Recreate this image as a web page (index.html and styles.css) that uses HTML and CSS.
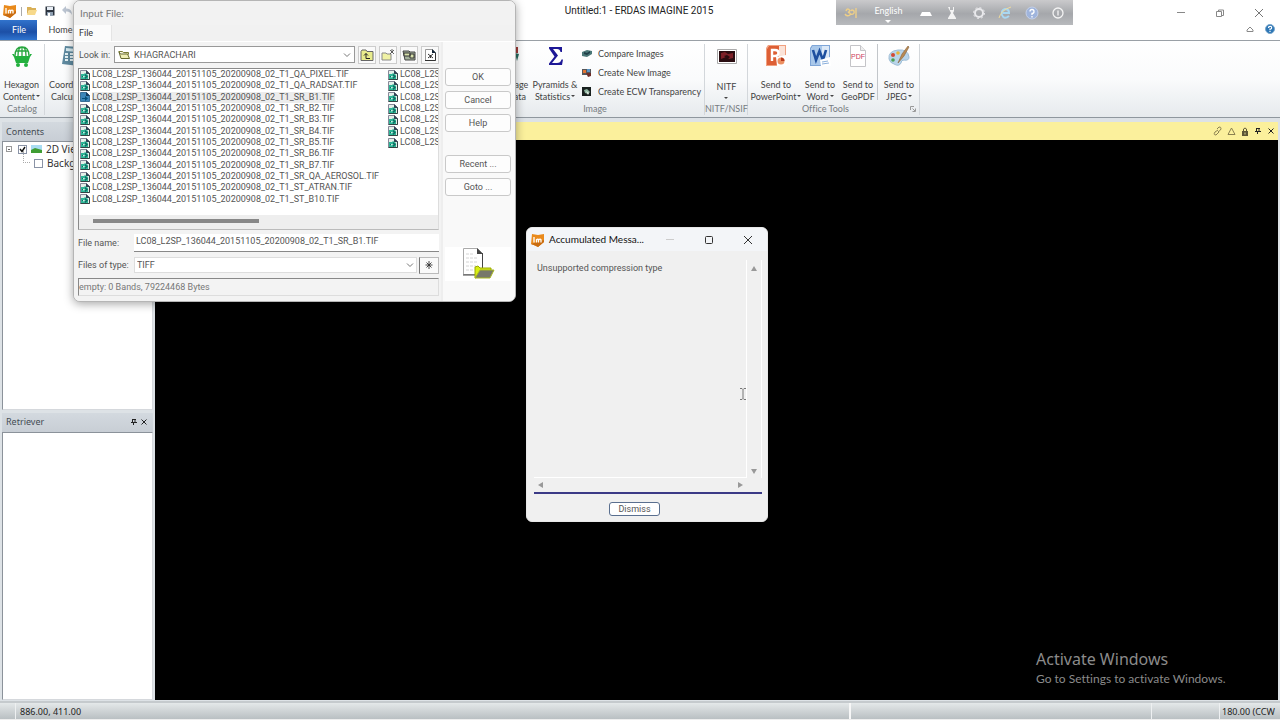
FILE: index.html
```html
<!DOCTYPE html>
<html lang="en">
<head>
<meta charset="utf-8">
<title>Untitled:1 - ERDAS IMAGINE 2015</title>
<link rel="stylesheet" href="styles.css">
</head>
<body>
<svg class="defs" aria-hidden="true">
  <symbol id="tif" viewBox="0 0 10 10"><path d="M.5.5h6l3 3v6h-9z" fill="#e4efe9" stroke="#889"/><path d="M6 0v4h4z" fill="#345"/><path d="M1 4h3l1-1 3 2v4H1z" fill="#2fb597"/><path d="M2 6h3V4l3 2.500L5 9V7H2z" fill="#0a6e62"/><path d="M3 6l3 .5-3 1z" fill="#d8fff0"/><path d="M.5 9.500h9v-6" fill="none" stroke="#344"/></symbol>
  <symbol id="tifsel" viewBox="0 0 10 10"><path d="M.5.5h6l3 3v6h-9z" fill="#3b86b8" stroke="#3a6f96"/><path d="M6 0v4h4z" fill="#143a5c"/><path d="M2 6h3V4l3 2.500L5 9V7H2z" fill="#07507a"/></symbol>
  <symbol id="imlogo" viewBox="0 0 14 14"><path d="M1 1l6 1 6-1v8l-3 2.500-3 2.500-3-1.500L0 11z" fill="#e98a1c"/><path d="M0 11l4 1.500 3 1.500 6-5v-2z" fill="#c96c10"/><path d="M3 4v5.500M5.500 9.500V6.200M5.500 6.800q1.500-1.300 2 0v2.700M7.500 6.800q1.800-1.300 2.500 0v2.700" stroke="#fff" stroke-width="1.300" fill="none"/></symbol>
  <symbol id="pin" viewBox="0 0 8 8"><path d="M2.500 1.500v3M5 1.500v3M2 1.500h4M1 4.500h6M3.500 4.500V7" stroke="#222" fill="none"/></symbol>
  <symbol id="x" viewBox="0 0 8 8"><path d="M1.500 1.500l5 5M6.500 1.500l-5 5" stroke="#222"/></symbol>
  <symbol id="chev" viewBox="0 0 8 8"><path d="M1 2.500l3 3 3-3" stroke="#777" fill="none"/></symbol>
</svg>

<div class="app">
  <header class="titlebar">
    <div class="quick">
      <svg class="logo" viewBox="0 0 14 14"><use href="#imlogo"/></svg>
      <span class="bar"></span>
      <button class="ico" aria-label="Open"><svg width="12" height="10" viewBox="0 0 12 10"><path d="M1 1h4l1 1h4v2H3L1 9z" fill="#d9b057"/><path d="M3 4h8L9 9H1z" fill="#f7d98b"/></svg></button>
      <button class="ico" aria-label="Save"><svg width="10" height="10" viewBox="0 0 10 10"><path d="M.5.5h9v9h-9z" fill="#2c3440"/><path d="M2 1h6v3H2z" fill="#e8eef5"/><path d="M2 6h6v4H2z" fill="#8fa0b2"/><path d="M3 7h2v3H3z" fill="#fff"/></svg></button>
      <button class="ico" aria-label="Undo"><svg width="12" height="10" viewBox="0 0 12 10"><path d="M0 4l4-4v2.500q6-.5 6 6.500-2-4-6-3.500V8z" fill="#bcc5d2"/></svg></button>
    </div>
    <h1 class="apptitle">Untitled:1 - ERDAS IMAGINE 2015</h1>
    <div class="winbtns">
      <button class="ico" aria-label="Minimize"><svg width="10" height="10" viewBox="0 0 10 10"><path d="M1 4.500h8" stroke="#888"/></svg></button>
      <button class="ico" aria-label="Restore"><svg width="10" height="10" viewBox="0 0 10 10"><path d="M1.500 3.500h5v5h-5zM3.500 3.500v-1.500h5v5.500H6.500" fill="none" stroke="#888"/></svg></button>
      <button class="ico" aria-label="Close"><svg width="10" height="10" viewBox="0 0 10 10"><path d="M1 1l8 8M9 1L1 9" stroke="#777"/></svg></button>
    </div>
  </header>

  <nav class="tabs">
    <button class="tab active">File</button>
    <button class="tab">Home</button>
    <div class="tabright">
      <button class="ico" aria-label="Collapse ribbon"><svg width="8" height="8" viewBox="0 0 8 8"><path d="M4 2L1 5v1.500h6V5z" fill="#fff" stroke="#888"/></svg></button>
      <button class="ico" aria-label="Help"><svg width="10" height="10" viewBox="0 0 10 10"><circle cx="5" cy="5" r="4.500" fill="#2d76b5" stroke="#7aa7cc"/><path d="M3.500 4q0-1.700 1.600-1.700T6.600 3.800 5 5.200v1M5 7v1" stroke="#fff" stroke-width="1.200" fill="none"/></svg></button>
    </div>
  </nav>

  <section class="ribbon">
    <div class="group catalog">
      <div class="items">
        <button class="big"><svg viewBox="0 0 24 24"><g fill="none" stroke="#29a63f" stroke-width="1.300"><path d="M5 12q0-9 7-9t7 9M8 12q0-9 4-9t4 9M12 3v9M6 7h12"/></g><path d="M2 10h2l1 2h14l1-2h2l-2 3-2 6H6l-2-6z" fill="#23b03e"/><circle cx="8" cy="21" r="2" fill="#23b03e"/><circle cx="16" cy="21" r="2" fill="#23b03e"/></svg><span>Hexagon<br>Content<i></i></span></button>
      </div>
      <div class="glabel">Catalog</div>
    </div>
    <div class="group coords">
      <div class="items">
        <button class="big"><svg viewBox="0 0 24 24"><path d="M6 2l14 1v19L3 20z" fill="#5f8aa0"/><path d="M7 4l11 1v3L7 7z" fill="#d8ecf2"/><path d="M6 10h3M11 10h3M6 13h3M11 13h3M6 16h3M11 16h3" stroke="#e6f2f5" stroke-width="2"/></svg><span>Coordinate<br>Calculator</span></button>
      </div>
      <div class="glabel"></div>
    </div>
    <div class="group image">
      <div class="items">
        <button class="big b25"><svg viewBox="0 0 24 24"><path d="M2 6l9-1v7l-3 5z" fill="#2c7b74"/><path d="M9 3h4v6H9z" fill="#a03a36"/><path d="M10 9l4 1-2 7z" fill="#246a5e"/></svg><span>Image<br>Data</span></button>
        <button class="big b52"><svg viewBox="0 0 24 24"><path d="M6 3h13v5h-1.500Q17 5 14 5h-4l5 6.500L9 19h5q3.500 0 4.500-3.500H20L19 21H6v-1.500l5.500-7L6 4.500z" fill="#1d1896"/></svg><span>Pyramids &amp;<br>Statistics<i></i></span></button>
        <div class="smalls">
          <button class="small"><svg viewBox="0 0 10 10"><path d="M0 3l5-2 5 1v3L5 8 0 7z" fill="#4a7777"/><path d="M2 3l3 1 3-2v2L5 6 2 5z" fill="#203f48"/></svg>Compare Images</button>
          <button class="small"><svg viewBox="0 0 10 10"><path d="M0 1h9v6H0z" fill="#55565a"/><path d="M1 2h3v3H1z" fill="#e07432"/><path d="M5 1h3v3H5z" fill="#5a94c4"/><path d="M4 5h5v3L6 9z" fill="#6c2c28"/></svg>Create New Image</button>
          <button class="small"><svg viewBox="0 0 10 10"><path d="M0 0h9v9H0z" fill="#18201e"/><path d="M2 3l3-1 3 3-2 2-3-1z" fill="#8fb5a0"/><path d="M4 4l3 2-1 2z" fill="#e5efe6"/></svg>Create ECW Transparency</button>
        </div>
      </div>
      <div class="glabel">Image</div>
    </div>
    <div class="group nitf">
      <div class="items">
        <button class="big"><svg viewBox="0 0 24 24"><path d="M2.500 5.500h19v14h-19z" fill="#fff" stroke="#aaa"/><path d="M4 7h16v11H4z" fill="#2a0d11"/><path d="M6 9l4-1 3 2 5-1v5l-4 1-3-2-5 2z" fill="#7d2028"/><path d="M9 12l3-1 3 2-2 2z" fill="#2a0d11"/></svg><span class="low">NITF<br><i class="mid"></i></span></button>
      </div>
      <div class="glabel">NITF/NSIF</div>
    </div>
    <div class="group office">
      <div class="items">
        <button class="big b48"><svg viewBox="0 0 24 24"><path d="M4 1h18v21H2V4z" fill="#f1a07f"/><path d="M5 2h16v19H3V5z" fill="#fbe3d8"/><path d="M3 5l2-3h10v19H3z" fill="#dd5f35"/><path d="M8 17V6h3q3.500 0 3.500 3T11 12H8" stroke="#fff" stroke-width="2.400" fill="none"/><path d="M12 13l10-2 1 11H13z" fill="#fff"/><circle cx="17" cy="17" r="3.500" fill="#ec8f61"/><path d="M17 17v-3.500a3.500 3.500 0 0 1 3.500 3.500z" fill="#b93a1c"/></svg><span>Send to<br>PowerPoint<i></i></span></button>
        <button class="big b40"><svg viewBox="0 0 24 24"><path d="M4 1h18v21H2V4z" fill="#7fa6d8"/><path d="M5 2h16v19H3V5z" fill="#dce9f7"/><path d="M3 5l2-3h9v19H3z" fill="#a9c8ea"/><path d="M5 6l3 10 3.500-9L15 16l3-10" stroke="#1d4f9f" stroke-width="2.600" fill="none"/><path d="M12 16l10-3 1 9H13z" fill="#fff"/><path d="M14 18l6-1M14 20l7-1" stroke="#8bb0dc"/></svg><span>Send to<br>Word<i></i></span></button>
        <button class="big b36"><svg viewBox="0 0 24 24"><path d="M4.500 1.500h10l5 5v16h-15z" fill="#fff" stroke="#c4c4c8"/><path d="M14.500 1.500v5h5" fill="#eee" stroke="#c4c4c8"/><text x="12" y="15" class="pdf">PDF</text></svg><span>Send to<br>GeoPDF</span></button>
        <span class="sep"></span>
        <button class="big b36"><svg viewBox="0 0 24 24"><path d="M2 15Q1 7 11 6t11 7q0 4-5 3-3 0-3 3-2 4-7 1-4-1-5-5z" fill="#b9d5ea" stroke="#9dbdd6"/><circle cx="6" cy="11" r="2" fill="#d24b35"/><circle cx="11" cy="9" r="1.800" fill="#e8b63a"/><circle cx="6" cy="16" r="1.800" fill="#4da055"/><path d="M21 2l-6 8-4 9 6-7 5-9z" fill="#b98a52" stroke="#86623a" stroke-width=".6"/></svg><span>Send to<br>JPEG<i></i></span></button>
      </div>
      <div class="glabel officelabel">Office Tools<svg width="6" height="6" viewBox="0 0 6 6"><path d="M.5 4V.5H4M2.500 5.500h3v-3M2.500 2.500l2.500 2.500" stroke="#999" fill="none"/></svg></div>
    </div>
  </section>

  <main class="work">
    <aside class="side">
      <section class="pane">
        <h2 class="panehead">Contents</h2>
        <div class="panebody tree">
          <div class="node"><span class="expander"></span><span class="check"><input type="checkbox" id="view" checked><svg width="9" height="9" viewBox="0 0 9 9"><path d="M2 4l2 2.500L7 2" stroke="#111" stroke-width="1.400" fill="none"/></svg></span><svg width="11" height="8" viewBox="0 0 11 8"><path d="M0 0h11v8H0z" fill="#a9dcf2"/><path d="M0 5l4-2 7 2v3H0z" fill="#3f9d33"/></svg><label for="view">2D View #1</label></div>
          <div class="node child"><span class="dots"></span><span class="check"><input type="checkbox" id="bg"></span><label for="bg">Background</label></div>
        </div>
      </section>
      <section class="pane">
        <h2 class="panehead">Retriever<span class="paneico"><button class="ico" aria-label="Pin"><svg width="8" height="8"><use href="#pin"/></svg></button><button class="ico" aria-label="Close"><svg width="8" height="8"><use href="#x"/></svg></button></span></h2>
        <div class="panebody"></div>
      </section>
    </aside>
    <section class="viewer">
      <div class="viewhead">
        <button class="ico" aria-label="Link"><svg width="9" height="10" viewBox="0 0 9 10"><path d="M4 3l2-2q3 0 1.500 3L5 6M5 4L2 6q-2 3 1 3l3-3" stroke="#8a8050" fill="none"/></svg></button>
        <button class="ico" aria-label="North"><svg width="9" height="9" viewBox="0 0 9 9"><path d="M4.500 1L8 7.500H1z" fill="none" stroke="#8a8050"/></svg></button>
        <button class="ico" aria-label="Lock"><svg width="8" height="9" viewBox="0 0 8 9"><path d="M2.500 4V2q1.500-2 3 0v2" fill="none" stroke="#5d5634"/><path d="M1 4h6v5H1z" fill="#5d5634"/><path d="M3.500 5.500h1v2h-1z" fill="#d8cf95"/></svg></button>
        <button class="ico" aria-label="Pin"><svg width="8" height="8"><use href="#pin"/></svg></button>
        <button class="ico" aria-label="Close"><svg width="8" height="8"><use href="#x"/></svg></button>
      </div>
      <div class="canvas"></div>
    </section>
  </main>

  <footer class="status">
    <span class="coord">886.00, 411.00</span>
    <span class="cell wide"></span>
    <span class="cell"></span>
    <span class="rot">180.00 (CCW</span>
  </footer>
</div>

<div class="langbar">
  <svg width="14" height="14" viewBox="0 0 14 14"><path d="M2 5q1-3 3-1.500T4 6.500q3 0 2 2.500-3 2-5-1M6 8q5 1 4-3-2-2-3 0M12 2v10" stroke="#eecf88" stroke-width="1.400" fill="none"/></svg>
  <button class="lang">English<i></i></button>
  <svg width="14" height="14" viewBox="0 0 14 14"><path d="M3 6h8l2 4H1z" fill="#fff"/></svg>
  <svg width="14" height="14" viewBox="0 0 14 14"><path d="M3 1h2v3h3V1h1v4L8 7l3 5v1H3v-1l3-5z" fill="#f3f3f3"/></svg>
  <svg width="14" height="14" viewBox="0 0 14 14"><circle cx="7" cy="7" r="4" fill="none" stroke="#e9e9ec" stroke-width="2"/><circle cx="7" cy="7" r="5.500" fill="none" stroke="#e9e9ec" stroke-dasharray="2 2.300"/></svg>
  <svg width="14" height="14" viewBox="0 0 14 14"><path d="M11 10q-5 4-7-1-1-5 3-6 4 0 4 4H5" stroke="#a9d8f2" stroke-width="2" fill="none"/><path d="M1 12Q3 4 13 1" stroke="#f0dc9c" fill="none"/></svg>
  <svg width="14" height="14" viewBox="0 0 14 14"><circle cx="7" cy="7" r="6" fill="#9fb4dc" stroke="#c4d0e8"/><path d="M5 5.500Q5 3.500 7 3.500t2 2-2 2V9M7 10v1.500" stroke="#fff" stroke-width="1.300" fill="none"/></svg>
  <svg width="14" height="14" viewBox="0 0 14 14"><circle cx="7" cy="7" r="5" fill="none" stroke="#f4f4f4" stroke-width="1.300"/><path d="M7 4.500v5" stroke="#f4f4f4" stroke-width="1.300"/></svg>
</div>

<div class="activate"><p class="a1">Activate Windows</p><p class="a2">Go to Settings to activate Windows.</p></div>

<div class="window filedlg" role="dialog" aria-labelledby="fd">
  <h2 class="fdtitle" id="fd">Input File:</h2>
  <div class="fdmenu"><button>File</button></div>
  <div class="fdbody">
    <div class="fdleft">
      <div class="lookrow">
        <label for="look">Look in:</label>
        <div class="combo look"><svg width="12" height="10" viewBox="0 0 12 10"><path d="M.5 1.500h4l1 1h5v2" fill="#e9e6a4" stroke="#777a35"/><path d="M1 2l2 6.500h8.500L9.500 4H2.500z" fill="#f0efb5" stroke="#66692f"/></svg><select id="look"><option>KHAGRACHARI</option></select><svg class="cv" width="8" height="8"><use href="#chev"/></svg></div>
        <button class="tool" aria-label="Up one level"><svg width="14" height="12" viewBox="0 0 14 12"><path d="M1 2.500l1-1.500h4l1 1.500h6v9H1z" fill="#e8ec8c" stroke="#666"/><path d="M6 4.500v5h4M4 6.500l2-2 2 2" stroke="#222" fill="none"/></svg></button>
        <button class="tool" aria-label="New folder"><svg width="14" height="12" viewBox="0 0 14 12"><path d="M1 4h4l1 1h4v6H1z" fill="#f0f2a5" stroke="#888"/><path d="M9 1l4 4M13 1L9 5M11 0v4" stroke="#444" stroke-width=".8"/></svg></button>
        <button class="tool" aria-label="Preview"><svg width="14" height="12" viewBox="0 0 14 12"><path d="M1 2h6l1 1h5v8H3z" fill="#a4b19a" stroke="#444"/><path d="M2 4h6v3H2zM8 5h4v4H8z" fill="#d8e2ab" stroke="#333"/></svg></button>
        <button class="tool" aria-label="Options"><svg width="14" height="12" viewBox="0 0 14 12"><path d="M2.500 .5h7l3 3v8h-10z" fill="#fff" stroke="#999"/><path d="M9 0v4h4z" fill="#123"/><path d="M12.500 4v7.500H2" stroke="#333" fill="none"/><path d="M5 5l5 4M10 5L5 9M7.500 6v3" stroke="#333"/></svg></button>
      </div>
      <div class="listbox">
        <ul class="files">
          <li><svg><use href="#tif"/></svg>LC08_L2SP_136044_20151105_20200908_02_T1_QA_PIXEL.TIF</li>
          <li><svg><use href="#tif"/></svg>LC08_L2SP_136044_20151105_20200908_02_T1_QA_RADSAT.TIF</li>
          <li><svg><use href="#tifsel"/></svg><span class="sel">LC08_L2SP_136044_20151105_20200908_02_T1_SR_B1.TIF</span></li>
          <li><svg><use href="#tif"/></svg>LC08_L2SP_136044_20151105_20200908_02_T1_SR_B2.TIF</li>
          <li><svg><use href="#tif"/></svg>LC08_L2SP_136044_20151105_20200908_02_T1_SR_B3.TIF</li>
          <li><svg><use href="#tif"/></svg>LC08_L2SP_136044_20151105_20200908_02_T1_SR_B4.TIF</li>
          <li><svg><use href="#tif"/></svg>LC08_L2SP_136044_20151105_20200908_02_T1_SR_B5.TIF</li>
          <li><svg><use href="#tif"/></svg>LC08_L2SP_136044_20151105_20200908_02_T1_SR_B6.TIF</li>
          <li><svg><use href="#tif"/></svg>LC08_L2SP_136044_20151105_20200908_02_T1_SR_B7.TIF</li>
          <li><svg><use href="#tif"/></svg>LC08_L2SP_136044_20151105_20200908_02_T1_SR_QA_AEROSOL.TIF</li>
          <li><svg><use href="#tif"/></svg>LC08_L2SP_136044_20151105_20200908_02_T1_ST_ATRAN.TIF</li>
          <li><svg><use href="#tif"/></svg>LC08_L2SP_136044_20151105_20200908_02_T1_ST_B10.TIF</li>
          <li><svg><use href="#tif"/></svg>LC08_L2S</li>
          <li><svg><use href="#tif"/></svg>LC08_L2S</li>
          <li><svg><use href="#tif"/></svg>LC08_L2S</li>
          <li><svg><use href="#tif"/></svg>LC08_L2S</li>
          <li><svg><use href="#tif"/></svg>LC08_L2S</li>
          <li><svg><use href="#tif"/></svg>LC08_L2S</li>
          <li><svg><use href="#tif"/></svg>LC08_L2S</li>
        </ul>
        <div class="hscroll"><span></span></div>
      </div>
      <div class="field"><label for="fn">File name:</label><input id="fn" type="text" value="LC08_L2SP_136044_20151105_20200908_02_T1_SR_B1.TIF"></div>
      <div class="field"><label for="ft">Files of type:</label><div class="combo type"><select id="ft"><option>TIFF</option></select><svg class="cv" width="8" height="8"><use href="#chev"/></svg></div><button class="star" aria-label="Filter"><svg width="8" height="8" viewBox="0 0 8 8"><path d="M4 0v8M.5 4h7M1.500 1.500l5 5M6.500 1.500l-5 5" stroke="#333" stroke-width=".9"/></svg></button></div>
      <p class="fdstatus">empty: 0 Bands, 79224468 Bytes</p>
    </div>
    <div class="fdright">
      <button class="pb">OK</button>
      <button class="pb">Cancel</button>
      <button class="pb">Help</button>
      <button class="pb gap">Recent ...</button>
      <button class="pb">Goto ...</button>
      <div class="pic"><svg width="34" height="34" viewBox="0 0 34 34"><path d="M2.500 1.500h14l5 5v21h-19z" fill="#fff" stroke="#aaa"/><path d="M21.500 6v22H2" fill="none" stroke="#444"/><path d="M16 1v6h6z" fill="#444"/><path d="M5 7h8M5 11h12M5 15h11M5 19h10M5 23h7" stroke="#d4d4d4" stroke-dasharray="3 1"/><path d="M14 31V20l3-1 2 2h11v4z" fill="#d8ee12" stroke="#9aa800"/><path d="M14 31l5-8h14l-4 8z" fill="#77786a" stroke="#a9b820"/></svg></div>
    </div>
  </div>
</div>

<div class="window msgdlg" role="dialog" aria-labelledby="md">
  <div class="mdhead">
    <svg width="14" height="14" viewBox="0 0 14 14"><use href="#imlogo"/></svg>
    <h2 id="md">Accumulated Messa...</h2>
    <button class="ico" aria-label="Minimize"><svg width="10" height="10" viewBox="0 0 10 10"><path d="M1 4.500h8" stroke="#ccc"/></svg></button>
    <button class="ico" aria-label="Maximize"><svg width="10" height="10" viewBox="0 0 10 10"><rect x="1.500" y="1.500" width="7" height="7" rx="1" fill="none" stroke="#333"/></svg></button>
    <button class="ico" aria-label="Close"><svg width="10" height="10" viewBox="0 0 10 10"><path d="M1 1l8 8M9 1L1 9" stroke="#333"/></svg></button>
  </div>
  <div class="mdarea">
    <p class="mdtext">Unsupported compression type</p>
    <div class="vbar"><i class="up"></i><i class="down"></i></div>
    <div class="hbar"><i class="left"></i><i class="right"></i></div>
  </div>
  <div class="mdfoot"><button class="dismiss">Dismiss</button></div>
  <svg class="cursor" width="8" height="12" viewBox="0 0 8 12"><path d="M1 .5h2l1 1 1-1h2M4 1.500v9M1 11.500h2l1-1 1 1h2" stroke="#777" fill="none"/></svg>
</div>
</body>
</html>
```
FILE: styles.css
```css
* { box-sizing: border-box; }
body { margin: 0; font: 9px/12px Lato, "Open Sans", sans-serif; font-variant-ligatures: none; color: #444; background: #fff; overflow: hidden; }
h1, h2, p, ul { margin: 0; padding: 0; font-weight: normal; list-style: none; }
button, input, select { font: inherit; color: inherit; background: none; border: 0; padding: 0; margin: 0; }
svg { display: block; flex: none; }
.defs { position: absolute; width: 0; height: 0; }
.ico { display: flex; }

.app { display: flex; flex-direction: column; height: 100vh; background: #dde2e6; }

.titlebar { display: grid; grid-template-columns: 1fr auto 1fr; align-items: center; height: 20px; padding-right: 2px; background: #fff; }
.quick { display: flex; align-items: center; gap: 4px; padding-left: 3px; height: 16px; }
.quick .ico + .ico { margin-left: 3px; }
.logo { width: 14px; height: 14px; }
.bar { width: 1px; height: 9px; background: #aaa; }
.apptitle { font: 10px/22px Roboto, sans-serif; color: #222; }
.winbtns { display: flex; justify-content: flex-end; gap: 29px; padding: 4px 14px 0 0; }

.tabs { display: flex; height: 21px; background: #fff; border-bottom: 1px solid #9aa0a6; }
.tab { width: 46px; padding: 0 0 0 1px; color: #444; }
.tab.active { width: 37px; background: linear-gradient(#3173cc, #1c4fa6 60%, #2f74cf); color: #fff; }
.tabright { display: flex; align-items: center; gap: 11px; margin-left: auto; padding: 0 5px 2px 0; }

.ribbon { display: flex; height: 77px; padding-top: 3px; background: linear-gradient(#fff, #fafbfc 50%, #e6eaed); border-bottom: 1px solid #8f979e; }
.group { display: flex; flex-direction: column; border-right: 1px solid #d3d7db; margin-bottom: 2px; }
.group .items { display: flex; height: 58px; }
.catalog { width: 45px; }
.coords { width: 438px; padding-left: 4px; }
.image { width: 222px; padding-left: 21px; }
.nitf { width: 43px; }
.office { width: 172px; padding-left: 4px; }
.big { display: flex; flex-direction: column; align-items: center; gap: 11px; min-width: 43px; text-align: center; line-height: 12px; white-space: nowrap; }
.big > svg { width: 24px; height: 24px; }
.low { padding-top: 2px; }
.b25 { min-width: 0; width: 25px; }
.b52 { min-width: 0; width: 52px; }
.b48 { width: 48px; }
.b40 { min-width: 0; width: 40px; }
.b36 { min-width: 0; width: 36px; }
.big i { display: inline-block; border: 2px solid transparent; border-top-color: #444; border-bottom: 0; vertical-align: 3px; margin-left: 1px; }
.big i.mid { margin: 0; }
.sep { width: 1px; margin: 0 3px 2px 1px; background: #c2c6ca; }
.pdf { font: 7px "Liberation Sans", sans-serif; fill: #cc3c5e; text-anchor: middle; }
.smalls { display: flex; flex-direction: column; gap: 7px; padding: 4px 0 0 1px; }
.small { display: flex; align-items: center; gap: 6px; white-space: nowrap; }
.small svg { width: 10px; height: 10px; }
.glabel { padding-right: 18px; text-align: center; color: #777c81; line-height: 14px; white-space: nowrap; }
.catalog .glabel, .nitf .glabel { padding: 0; }
.officelabel { display: flex; align-items: center; justify-content: flex-end; gap: 61px; height: 14px; padding-right: 3px; }

.work { display: flex; flex: 1; min-height: 0; padding: 4px 2px 1px 0; gap: 2px; }
.side { display: grid; grid-template-rows: 1fr 1fr; gap: 3px; width: 153px; padding-left: 2px; }
.pane { display: flex; flex-direction: column; min-height: 0; }
.panehead { display: flex; align-items: center; justify-content: space-between; height: 19px; padding: 0 4px; font: 9px/18px "Noto Sans", sans-serif; color: #444c54; background: linear-gradient(#d3d9df, #c8ced5); }
.paneico { display: flex; gap: 2px; padding-right: 1px; }
.panebody { flex: 1; background: #fff; border: 1px solid #8b929a; border-right-color: #d5d8dc; border-bottom-color: #d5d8dc; }
.tree { font: 10px/14px "Noto Sans", sans-serif; color: #333; white-space: nowrap; overflow: hidden; }
.node { display: flex; align-items: center; height: 14px; gap: 4px; padding-left: 3px; }
.node label { width: 28px; overflow: hidden; }
.check { display: grid; }
.check > * { grid-area: 1 / 1; pointer-events: none; }
.check input { appearance: none; width: 9px; height: 9px; border: 1px solid #8a93a6; background: #fff; pointer-events: auto; }
.expander { width: 6px; height: 6px; margin-right: 2px; border: 1px solid #999; background: linear-gradient(#666, #666) center / 2px 1px no-repeat; }
.child { padding-left: 20px; }
.dots { width: 7px; height: 12px; margin-bottom: 12px; border: dotted #aaa; border-width: 0 0 1px 1px; }

.viewer { display: flex; flex-direction: column; flex: 1; min-width: 0; }
.viewhead { display: flex; align-items: center; justify-content: flex-end; gap: 5px; height: 18px; padding-right: 3px; background: #fbf09c; }
.canvas { flex: 1; background: #000; }

.status { display: flex; height: 19px; border-top: 2px solid #c5cacd; border-bottom: 1px solid #eee; font: 9px/17px "Noto Sans", sans-serif; background: linear-gradient(#e4e8e9, #b9bfc2); padding-left: 15px; color: #222; white-space: nowrap; }
.status span { border-left: 1px solid #eef0f1; }
.coord { flex: 1; padding-left: 4px; }
.status .wide { width: 302px; border-left: 2px solid #f7f7f7; }
.cell { width: 68px; }
.rot { width: 61px; padding-left: 2px; overflow: hidden; }

.langbar { position: absolute; left: 836px; top: 0; display: flex; align-items: center; justify-content: space-between; gap: 12px; width: 237px; height: 25px; padding: 0 8px; background: linear-gradient(#cacacc, #a5a7ab 55%, #b8babd); }
.lang { display: flex; flex-direction: column; align-items: center; color: #fff; font: 9px/12px Lato, sans-serif; padding-top: 3px; margin: 0 4px; }
.lang i { border: 3px solid transparent; border-top-color: #fff; border-bottom: 0; margin-top: 3px; }

.activate { position: absolute; left: 1036px; top: 648px; color: #8b8b8b; white-space: nowrap; }
.a1 { font: 16px/22px "Noto Sans", sans-serif; }
.a2 { font-size: 12px; line-height: 18px; }

.window { position: absolute; overflow: hidden; font: 9px/12px Roboto, sans-serif; color: #555; background: #f0f0f0; }
.filedlg { left: 73px; top: 0; width: 443px; border: 1px solid #b5b5b5; border-radius: 7px; background: #f8f8f8; box-shadow: 0 2px 10px rgba(0, 0, 0, .35); }
.fdtitle { height: 24px; padding-left: 6px; font: 10px/24px Lato, sans-serif; color: #777; background: #f2f2f2; }
.fdmenu { height: 17px; background: #f1f1f1; border-bottom: 1px solid #fff; }
.fdmenu button { height: 16px; width: 38px; padding-left: 5px; text-align: left; background: #fbfbfb; border-right: 1px solid #e4e4e4; color: #333; }
.fdbody { display: grid; grid-template-columns: minmax(0, 1fr) 72px; }
.fdleft { display: flex; flex-direction: column; gap: 4px; min-width: 0; padding: 3px 2px 5px 4px; background: #f3f3f3; border-right: 2px solid #eee; }
.lookrow { display: flex; align-items: center; gap: 3px; height: 19px; }
.lookrow label { width: 33px; padding-left: 1px; }
.combo { display: flex; align-items: center; gap: 4px; height: 17px; padding: 0 3px; background: #fff; border: 1px solid #999; min-width: 0; }
.combo select { appearance: none; flex: 1; min-width: 0; outline: 0; }
.look { flex: 1; }
.tool { display: flex; align-items: center; justify-content: center; width: 18px; height: 18px; background: #fafafa; border: 1px solid #ccc; }
.tool svg { width: 14px; height: 12px; }
.listbox { background: #fff; border: 1px solid #8a8a8a; border-right-color: #ddd; border-bottom-color: #bbb; overflow: hidden; min-width: 0; }
.files { display: grid; grid-auto-flow: column; grid-template-rows: repeat(12, minmax(0, 1fr)); grid-template-columns: 308px 60px; height: 136px; margin-bottom: 10px; line-height: 11px; }
.files li { display: flex; align-items: center; gap: 2px; padding-left: 1px; white-space: nowrap; }
.files svg { width: 10px; height: 10px; }
.files .sel { background: #ececec; }
.hscroll { height: 14px; padding: 4px 0 0 14px; background: #eee; }
.hscroll span { display: block; width: 48%; height: 4px; background: #888; }
.field { display: flex; align-items: center; height: 18px; }
.field label { width: 56px; flex: none; }
.field input { flex: 1; min-width: 0; height: 18px; padding: 0 2px 3px; background: #fff; border-bottom: 1px solid #888; outline: 0; }
.type { flex: 1; height: 16px; padding: 0 2px; border-color: #ddd; }
.star { display: flex; align-items: center; justify-content: center; width: 20px; height: 17px; margin-left: 2px; background: #fafafa; border: 1px solid #bbb; border-left-color: #777; }
.fdstatus { height: 18px; line-height: 16px; border: 1px solid #ddd; border-top-color: #888; border-left-color: #888; color: #777; }
.fdright { display: flex; flex-direction: column; gap: 5px; padding: 26px 4px 0 2px; background: #f9f9f9; }
.pb { height: 18px; background: #fdfdfd; border: 1px solid #c9c9c9; border-radius: 3px; }
.gap { margin-top: 18px; }
.pic { display: flex; justify-content: center; margin-top: 46px; background: #fff; }

.msgdlg { left: 526px; top: 227px; width: 242px; height: 295px; display: flex; flex-direction: column; border: 1px solid #e8e8e8; border-radius: 6px; }
.mdhead { display: flex; align-items: center; gap: 4px; height: 23px; padding: 0 14px 0 4px; background: #f3f5f8; }
.mdhead h2 { font: 10px/23px Lato, sans-serif; color: #111; margin-right: auto; }
.mdhead .ico + .ico { margin-left: 25px; }
.mdarea { display: grid; grid-template-columns: 1fr 15px; grid-template-rows: 1fr 14px; flex: 1; margin: 9px 5px 0 7px; border-bottom: 2px solid #3b3a86; }
.mdtext { padding: 2px 3px; border-right: 1px solid #fff; border-bottom: 1px solid #fff; }
.vbar { display: flex; flex-direction: column; align-items: center; justify-content: space-between; padding: 6px 0 4px; border-right: 1px solid #fff; }
.hbar { display: flex; align-items: center; justify-content: space-between; padding: 0 4px; }
.vbar i, .hbar i { border: 3px solid transparent; }
.vbar .up { border-bottom: 5px solid #999; border-top: 0; }
.vbar .down { border-top: 5px solid #999; border-bottom: 0; }
.hbar .left { border-right: 5px solid #999; border-left: 0; }
.hbar .right { border-left: 5px solid #999; border-right: 0; }
.mdfoot { display: flex; justify-content: center; padding: 8px 25px 5px 0; }
.dismiss { width: 51px; height: 14px; background: #fff; border: 1px solid #5a6f8f; border-radius: 3px; line-height: 12px; }
.cursor { position: absolute; left: 212px; top: 160px; }
```
